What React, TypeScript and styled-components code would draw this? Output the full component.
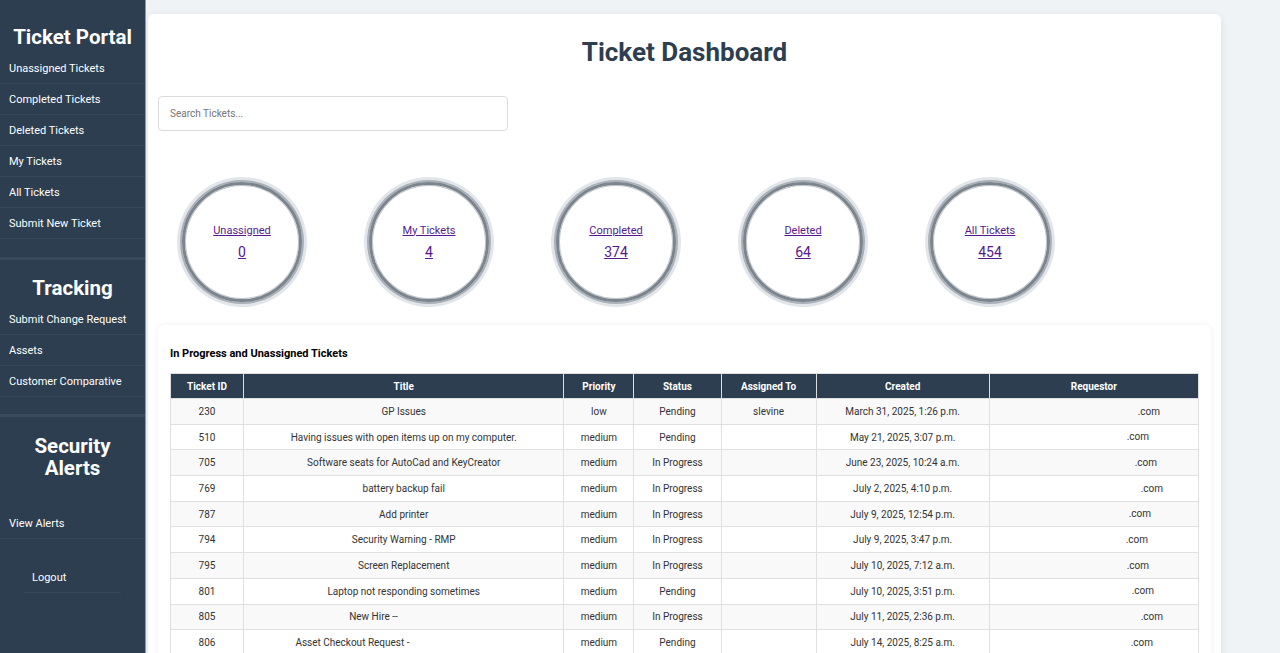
import React from "react";
import styled, { createGlobalStyle } from "styled-components";

const GlobalStyle = createGlobalStyle`
  html, body {
    margin: 0;
    padding: 0;
    height: 100%;
    overflow: hidden;
  }
  body {
    font-family: Roboto, "Liberation Sans", Arial, sans-serif;
    background: #f0f3f6;
    color: #333;
  }
`;

const Layout = styled.div`
  display: flex;
  height: 100vh;
  overflow: hidden;
`;

const Sidebar = styled.nav`
  width: 145px;
  flex-shrink: 0;
  background: #2c3e50;
  border-right: 1px solid #8d97a1;
  color: #fff;
`;

const SideSection = styled.section<{ $pad?: number; $last?: boolean }>`
  padding-bottom: ${(p) => p.$pad ?? 18}px;
  border-bottom: ${(p) => (p.$last ? "none" : "3px solid #384a5c")};
`;

const SideTitle = styled.h2<{ $top: number; $bottom: number }>`
  margin: ${(p) => p.$top}px 0 ${(p) => p.$bottom}px;
  font-size: 20.5px;
  line-height: 22px;
  font-weight: 700;
  text-align: center;
  color: #fff;
`;

const SideList = styled.ul`
  list-style: none;
  margin: 0;
  padding: 0;
`;

const SideItem = styled.li`
  padding: 8px 9px 7px;
  font-size: 11px;
  line-height: 15px;
  border-bottom: 1px solid #354759;
`;

const LogoutItem = styled.div`
  margin: 23px 24px 0;
  padding: 8px 8px 7px;
  font-size: 11px;
  line-height: 15px;
  border-bottom: 1px solid #354759;
`;

const Main = styled.main`
  flex: 1;
  padding: 14px 0 0 2px;
  overflow: hidden;
`;

const Card = styled.div`
  width: 1053px;
  padding: 0 10px 20px;
  background: #fff;
  border-radius: 6px;
  box-shadow: 0 2px 8px rgba(0, 0, 0, 0.08);
`;

const PageTitle = styled.h1`
  margin: 0;
  padding: 23px 0 29px;
  font-size: 26px;
  line-height: 30px;
  font-weight: 700;
  text-align: center;
  color: #2c3e50;
`;

const Search = styled.input`
  display: block;
  box-sizing: border-box;
  width: 350px;
  height: 35px;
  padding: 0 11px;
  border: 1px solid #dcdcdc;
  border-radius: 4px;
  font-family: Roboto, "Liberation Sans", Arial, sans-serif;
  font-size: 10px;
  color: #333;
  outline: none;
  &::placeholder {
    color: #757575;
  }
`;

const CircleRow = styled.div`
  display: flex;
  gap: 67px;
  padding: 51px 0 23px 24px;
`;

const Circle = styled.div`
  box-sizing: border-box;
  width: 120px;
  height: 120px;
  border-radius: 50%;
  border: 3px solid #7c858e;
  box-shadow: 0 0 0 2px #a9b0b7, 0 0 0 5px #e2e6ea, inset 0 0 0 1px #c3c8cd;
  display: flex;
  flex-direction: column;
  align-items: center;
  justify-content: center;
  gap: 5px;
`;

const CircleLabel = styled.a`
  font-size: 11px;
  line-height: 14px;
  color: #551a8b;
  text-decoration: underline;
`;

const CircleValue = styled.a`
  font-size: 14px;
  line-height: 18px;
  color: #551a8b;
  text-decoration: underline;
`;

const TableCard = styled.section`
  padding: 22px 12px 12px;
  background: #fff;
  border-radius: 6px;
  box-shadow: 0 0 6px rgba(0, 0, 0, 0.07);
`;

const TableTitle = styled.h3`
  margin: 0 0 12px;
  font-size: 11px;
  line-height: 14px;
  font-weight: 700;
  color: #000;
`;

const Table = styled.table`
  width: 100%;
  border-collapse: collapse;
  table-layout: fixed;
`;

const Th = styled.th`
  height: 24px;
  padding: 0 6px;
  background: #2c3e50;
  color: #fff;
  font-size: 10px;
  font-weight: 700;
  text-align: center;
  border: 1px solid #dddddd;
`;

const Tr = styled.tr`
  &:nth-child(odd) {
    background: #f9f9f9;
  }
`;

const Td = styled.td`
  height: 24.7px;
  padding: 0 6px;
  font-size: 10px;
  color: #333;
  text-align: center;
  border: 1px solid #e0e0e0;
  white-space: nowrap;
  overflow: hidden;
`;

const Hidden = styled.span<{ $w: number }>`
  display: inline-block;
  width: ${(p) => p.$w}px;
  height: 1em;
  vertical-align: middle;
`;

const circles = [
  { label: "Unassigned", value: 0 },
  { label: "My Tickets", value: 4 },
  { label: "Completed", value: 374 },
  { label: "Deleted", value: 64 },
  { label: "All Tickets", value: 454 },
];

const columns = [
  { name: "Ticket ID", w: 73 },
  { name: "Title", w: 320 },
  { name: "Priority", w: 70 },
  { name: "Status", w: 87 },
  { name: "Assigned To", w: 95 },
  { name: "Created", w: 173 },
  { name: "Requestor", w: 209 },
];

interface Ticket {
  id: number;
  title: string;
  titleHidden?: number;
  priority: string;
  status: string;
  assigned: string;
  created: string;
  mail: number;
}

const tickets: Ticket[] = [
  { id: 230, title: "GP Issues", priority: "low", status: "Pending", assigned: "slevine", created: "March 31, 2025, 1:26 p.m.", mail: 110 },
  { id: 510, title: "Having issues with open items up on my computer.", priority: "medium", status: "Pending", assigned: "", created: "May 21, 2025, 3:07 p.m.", mail: 88 },
  { id: 705, title: "Software seats for AutoCad and KeyCreator", priority: "medium", status: "In Progress", assigned: "", created: "June 23, 2025, 10:24 a.m.", mail: 104 },
  { id: 769, title: "battery backup fail", priority: "medium", status: "In Progress", assigned: "", created: "July 2, 2025, 4:10 p.m.", mail: 116 },
  { id: 787, title: "Add printer", priority: "medium", status: "In Progress", assigned: "", created: "July 9, 2025, 12:54 p.m.", mail: 92 },
  { id: 794, title: "Security Warning - RMP", priority: "medium", status: "In Progress", assigned: "", created: "July 9, 2025, 3:47 p.m.", mail: 86 },
  { id: 795, title: "Screen Replacement", priority: "medium", status: "In Progress", assigned: "", created: "July 10, 2025, 7:12 a.m.", mail: 88 },
  { id: 801, title: "Laptop not responding sometimes", priority: "medium", status: "Pending", assigned: "", created: "July 10, 2025, 3:51 p.m.", mail: 98 },
  { id: 805, title: "New Hire -- ", titleHidden: 58, priority: "medium", status: "In Progress", assigned: "", created: "July 11, 2025, 2:36 p.m.", mail: 116 },
  { id: 806, title: "Asset Checkout Request - ", titleHidden: 100, priority: "medium", status: "Pending", assigned: "", created: "July 14, 2025, 8:25 a.m.", mail: 96 },
];

export default function App() {
  return (
    <>
      <GlobalStyle />
      <Layout>
        <Sidebar>
          <SideSection>
            <SideTitle $top={26} $bottom={5}>Ticket Portal</SideTitle>
            <SideList>
              <SideItem>Unassigned Tickets</SideItem>
              <SideItem>Completed Tickets</SideItem>
              <SideItem>Deleted Tickets</SideItem>
              <SideItem>My Tickets</SideItem>
              <SideItem>All Tickets</SideItem>
              <SideItem>Submit New Ticket</SideItem>
            </SideList>
          </SideSection>
          <SideSection $pad={17}>
            <SideTitle $top={17} $bottom={5}>Tracking</SideTitle>
            <SideList>
              <SideItem>Submit Change Request</SideItem>
              <SideItem>Assets</SideItem>
              <SideItem>Customer Comparative</SideItem>
            </SideList>
          </SideSection>
          <SideSection $last>
            <SideTitle $top={18} $bottom={29}>
              Security
              <br />
              Alerts
            </SideTitle>
            <SideList>
              <SideItem>View Alerts</SideItem>
            </SideList>
            <LogoutItem>Logout</LogoutItem>
          </SideSection>
        </Sidebar>
        <Main>
          <Card>
            <PageTitle>Ticket Dashboard</PageTitle>
            <Search placeholder="Search Tickets..." />
            <CircleRow>
              {circles.map((c) => (
                <Circle key={c.label}>
                  <CircleLabel href="#">{c.label}</CircleLabel>
                  <CircleValue href="#">{c.value}</CircleValue>
                </Circle>
              ))}
            </CircleRow>
            <TableCard>
              <TableTitle>In Progress and Unassigned Tickets</TableTitle>
              <Table>
                <colgroup>
                  {columns.map((c) => (
                    <col key={c.name} style={{ width: c.w }} />
                  ))}
                </colgroup>
                <thead>
                  <tr>
                    {columns.map((c) => (
                      <Th key={c.name}>{c.name}</Th>
                    ))}
                  </tr>
                </thead>
                <tbody>
                  {tickets.map((t) => (
                    <Tr key={t.id}>
                      <Td>{t.id}</Td>
                      <Td>
                        {t.title}
                        {t.titleHidden && <Hidden $w={t.titleHidden} />}
                      </Td>
                      <Td>{t.priority}</Td>
                      <Td>{t.status}</Td>
                      <Td>{t.assigned || <Hidden $w={40} />}</Td>
                      <Td>{t.created}</Td>
                      <Td>
                        <Hidden $w={t.mail} />
                        .com
                      </Td>
                    </Tr>
                  ))}
                </tbody>
              </Table>
            </TableCard>
          </Card>
        </Main>
      </Layout>
    </>
  );
}
